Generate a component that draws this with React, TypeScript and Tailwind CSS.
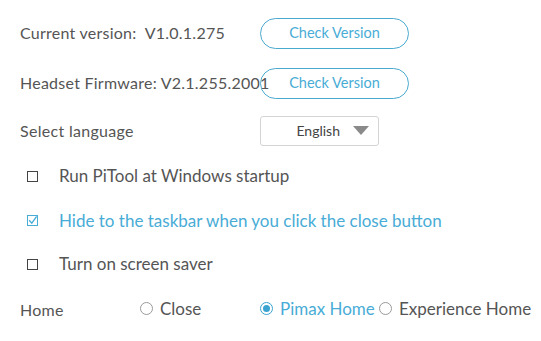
import React from "react";

const font = { fontFamily: "Lato, 'Noto Sans', sans-serif" };

function CheckButton() {
  return (
    <button className="flex h-[31px] w-[149px] shrink-0 items-center justify-center rounded-full border border-[#4aa9cf] bg-transparent text-[14.5px] text-[#48acd6]">
      Check Version
    </button>
  );
}

function CheckRow({ label, checked, h }: { label: string; checked?: boolean; h: string }) {
  return (
    <div className={`flex items-center ${h}`}>
      <span
        className={`ml-[7px] flex h-[11px] w-[11px] items-center justify-center border ${
          checked ? "border-[#48acd6]" : "border-[#444]"
        }`}
      >
        {checked && (
          <svg width="9" height="9" viewBox="0 0 9 9">
            <path d="M1.2 4.2 L3.8 7.2 L8.6 0.4" fill="none" stroke="#48acd6" strokeWidth="1.3" />
          </svg>
        )}
      </span>
      <span className={`ml-[21px] text-[17px] ${checked ? "text-[#48acd6]" : "text-[#555]"}`}>
        {label}
      </span>
    </div>
  );
}

function Radio({ label, on }: { label: string; on?: boolean }) {
  return (
    <div className="flex items-center">
      <span
        className={`flex h-[13px] w-[13px] items-center justify-center rounded-full border ${
          on ? "border-[#3aa3d0]" : "border-[#9a9a9a]"
        }`}
      >
        {on && <span className="h-[7px] w-[7px] rounded-full bg-[#3aa3d0]" />}
      </span>
      <span className={`ml-[7px] text-[17px] ${on ? "text-[#48acd6]" : "text-[#555]"}`}>
        {label}
      </span>
    </div>
  );
}

export default function App() {
  return (
    <div className="h-[341px] w-[541px] bg-white pl-[20px] pt-[8px]" style={font}>
      <div className="flex h-[50px] items-center">
        <div className="w-[240px] shrink-0 text-[16px] tracking-[0.25px] text-[#555]">Current version:&nbsp; V1.0.1.275</div>
        <CheckButton />
      </div>
      <div className="flex h-[50px] items-center">
        <div className="w-[240px] shrink-0 whitespace-nowrap text-[16px] tracking-[0.25px] text-[#555]">
          Headset Firmware: V2.1.255.2001
        </div>
        <CheckButton />
      </div>
      <div className="flex h-[45px] items-center">
        <div className="w-[240px] shrink-0 text-[16px] tracking-[0.3px] text-[#555]">Select language</div>
        <div className="flex h-[30px] w-[119px] items-center justify-end rounded-[3px] border border-[#d4d4d4] pr-[9px]">
          <span className="text-[14px] text-[#444]">English</span>
          <svg className="ml-[13px]" width="16" height="9" viewBox="0 0 16 9">
            <path d="M0 0 H16 L8 9 Z" fill="#8a8a8a" />
          </svg>
        </div>
      </div>
      <CheckRow label="Run PiTool at Windows startup" h="h-[46px]" />
      <CheckRow label="Hide to the taskbar when you click the close button" checked h="h-[43px]" />
      <CheckRow label="Turn on screen saver" h="h-[44px]" />
      <div className="flex h-[45px] items-center">
        <div className="w-[120px] pt-[3px] text-[16px] tracking-[0.25px] text-[#555]">Home</div>
        <div className="w-[120px]">
          <Radio label="Close" />
        </div>
        <div className="w-[119px]">
          <Radio label="Pimax Home" on />
        </div>
        <Radio label="Experience Home" />
      </div>
    </div>
  );
}
